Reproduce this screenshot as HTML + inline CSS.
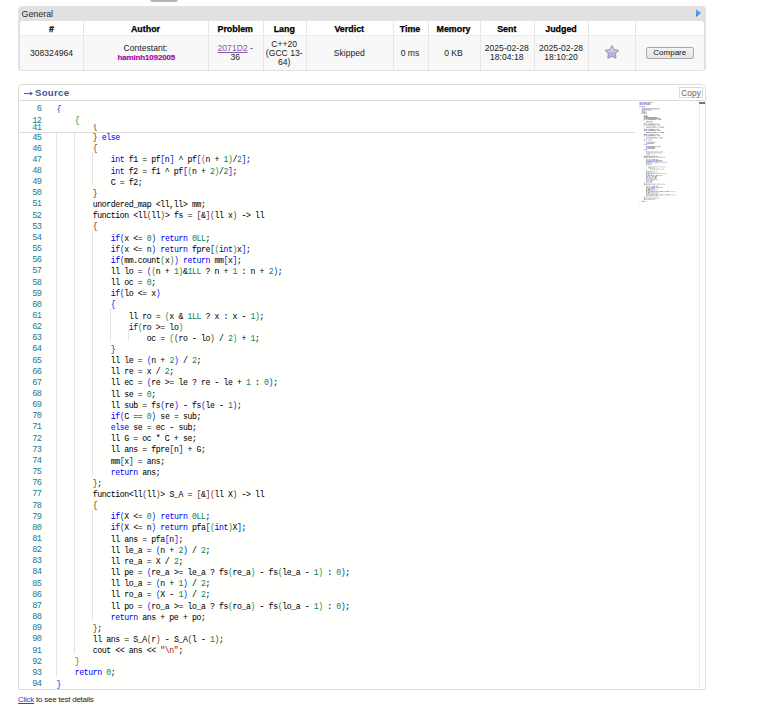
<!DOCTYPE html>
<html><head><meta charset="utf-8">
<style>
html,body{margin:0;padding:0;background:#fff;}
body{width:768px;height:713px;position:relative;overflow:hidden;font-family:"Liberation Sans",sans-serif;color:#222;}
.abs{position:absolute;}
#tab{left:149.5px;top:-3px;width:28px;height:5px;background:#b4b4b4;border-radius:3px;}
#gen{left:18px;top:6px;width:688px;height:65px;background:#e1e1e1;border-radius:4px;}
#gentitle{left:21.5px;top:8.5px;font-size:8.9px;line-height:10px;color:#2a2a2a;}
#tri{left:696px;top:9px;width:0;height:0;border-top:4px solid transparent;border-bottom:4px solid transparent;border-left:5px solid #3d8ede;}
#tbl{left:20px;top:20.5px;width:684px;height:49.5px;background:#f8f8f8;border-radius:3px 3px 0 0;overflow:hidden;}
#thead{left:0;top:0;width:684px;height:14.5px;background:#fff;}
.vd{position:absolute;top:0;width:1px;height:49.5px;background:#e6e6e6;}
#hline{left:0;top:14.5px;width:684px;height:1px;background:#ececec;}
.th{position:absolute;top:1.6px;height:14.5px;line-height:14.5px;text-align:center;font-weight:bold;font-size:8.9px;color:#000;-webkit-text-stroke:0.25px #000;}
.td{position:absolute;text-align:center;font-size:8.6px;line-height:8.9px;color:#222;}
#src{left:18px;top:84px;width:686px;height:604px;border:1px solid #dcdcdc;border-radius:4px 4px 0 0;background:#fff;}
#srchead{left:0;top:0;width:686px;height:15px;border-bottom:1px solid #dcdcdc;}
#srctitle{left:16px;top:2.7px;font-size:9.6px;letter-spacing:0.3px;line-height:10px;font-weight:bold;color:#3b5998;}
#copy{left:660.3px;top:2.3px;width:21.6px;height:8.3px;border:1px solid #dadada;font-size:8.4px;line-height:8.6px;text-align:center;color:#666;background:#fff;}
#ed{left:0;top:16.5px;width:686px;height:587.5px;background:#fffffe;overflow:hidden;}
.ln{position:absolute;left:0;width:41.4px;padding-top:3.2px;text-align:right;font-family:"Liberation Mono",monospace;font-size:8.7px;letter-spacing:-0.6px;height:11.153px;line-height:11.153px;color:#237893;}
.cl{position:absolute;left:56.6px;padding-top:2.8px;white-space:pre;font-family:"Liberation Mono",monospace;font-size:8.2px;letter-spacing:-0.403px;height:11.153px;line-height:11.153px;color:#000;-webkit-text-stroke:0.04px currentColor;}
.gd{position:absolute;width:1px;background:#e4e4e4;}
.srow{position:absolute;left:0;width:635px;height:11.134px;background:#fffffe;}
#stickyline{left:18px;top:132px;width:617px;height:1px;background:#dddddd;}
#vscroll{left:699px;top:101px;width:1px;height:587px;background:#ececec;}
#vthumb{left:699px;top:102px;width:6px;height:2px;background:#777;}
#click{left:18px;top:695.3px;font-size:8px;letter-spacing:-0.25px;line-height:10px;color:#222;}
#click a{color:#3344cc;text-decoration:underline;}
</style></head><body>
<div id="tab" class="abs"></div>
<div id="gen" class="abs"></div>
<div id="gentitle" class="abs">General</div>
<svg class="abs" style="left:696px;top:9px" width="6" height="8" viewBox="0 0 6 8"><defs><linearGradient id="tg" x1="0" y1="0" x2="0" y2="1"><stop offset="0" stop-color="#7ab8ec"/><stop offset="1" stop-color="#2a7fd4"/></linearGradient></defs><path d="M0 0 L5 4 L0 8 Z" fill="url(#tg)"/></svg>
<div id="tbl" class="abs">
  <div id="thead" class="abs"></div>
  <div id="hline" class="abs"></div>
  <div class="vd" style="left:63px"></div>
  <div class="vd" style="left:188px"></div>
  <div class="vd" style="left:242.5px"></div>
  <div class="vd" style="left:286px"></div>
  <div class="vd" style="left:372.5px"></div>
  <div class="vd" style="left:407.5px"></div>
  <div class="vd" style="left:459.5px"></div>
  <div class="vd" style="left:514px"></div>
  <div class="vd" style="left:568px"></div>
  <div class="vd" style="left:615px"></div>
  <div class="th" style="left:0;width:63px">#</div>
  <div class="th" style="left:63px;width:125px">Author</div>
  <div class="th" style="left:188px;width:54.5px">Problem</div>
  <div class="th" style="left:242.5px;width:43.5px">Lang</div>
  <div class="th" style="left:286px;width:86.5px">Verdict</div>
  <div class="th" style="left:372.5px;width:35px">Time</div>
  <div class="th" style="left:407.5px;width:52px">Memory</div>
  <div class="th" style="left:459.5px;width:54.5px">Sent</div>
  <div class="th" style="left:514px;width:54px">Judged</div>
  <div class="td" style="left:0;width:63px;top:28.2px">308324964</div>
  <div class="td" style="left:63px;width:125px;top:23.4px">Contestant:<br><b style="color:#a0a;font-size:8px;letter-spacing:-0.16px;position:relative;left:0.8px;-webkit-text-stroke:0.15px #a0a">haminh1092005</b></div>
  <div class="td" style="left:188px;width:54.5px;top:23.4px"><span style="color:#8a5aa8;text-decoration:underline">2071D2</span> -<br>36</div>
  <div class="td" style="left:242.5px;width:43.5px;top:19.2px">C++20<br>(GCC 13-<br>64)</div>
  <div class="td" style="left:286px;width:86.5px;top:28.2px">Skipped</div>
  <div class="td" style="left:372.5px;width:35px;top:28.2px">0 ms</div>
  <div class="td" style="left:407.5px;width:52px;top:28.2px">0 KB</div>
  <div class="td" style="left:459.5px;width:54.5px;top:23.4px">2025-02-28<br>18:04:18</div>
  <div class="td" style="left:514px;width:54px;top:23.4px">2025-02-28<br>18:10:20</div>
  <svg class="abs" style="left:584.2px;top:24.3px" width="16" height="15" viewBox="0 0 16 15">
    <defs><linearGradient id="sg" x1="0" y1="0" x2="0" y2="1"><stop offset="0" stop-color="#d6d6e2"/><stop offset="0.5" stop-color="#c8c8de"/><stop offset="0.55" stop-color="#b2b2dc"/><stop offset="1" stop-color="#b8b8ee"/></linearGradient></defs>
    <path d="M7.90 0.60 L10.10 4.57 L14.56 5.44 L11.47 8.76 L12.01 13.26 L7.90 11.35 L3.79 13.26 L4.33 8.76 L1.24 5.44 L5.70 4.57 Z" fill="url(#sg)" stroke="#8e8eaa" stroke-width="1" stroke-linejoin="round"/>
  </svg>
  <div class="abs" style="left:626px;top:26.6px;width:45.5px;height:9.5px;border:1px solid #a8a8a8;border-radius:2px;background:linear-gradient(#f4f4f4,#e4e4e4);font-size:8px;line-height:9.5px;text-align:center;color:#111;">Compare</div>
</div>

<div id="src" class="abs">
  <div id="srchead" class="abs"></div>
  <svg class="abs" style="left:5px;top:6.2px" width="10" height="5" viewBox="0 0 10 5"><path d="M0 2.5 H7" stroke="#4a66a8" stroke-width="1.1"/><path d="M6.2 0.6 L9 2.5 L6.2 4.4 Z" fill="#3b5998"/></svg><div id="srctitle" class="abs">Source</div>
  <div id="copy" class="abs"><span style="position:relative;top:0.8px">Copy</span></div>
</div>
<div class="abs" style="left:19px;top:101px;width:686px;height:587.5px;overflow:hidden;">
  <div class="abs" style="left:-19px;top:-101px;width:768px;height:713px;">
    <div class="abs" style="left:18px;top:101px;width:687px;height:588px;background:#fffffe"></div>
    <div class="gd" style="left:56.00px;top:129.33px;height:546.50px"></div><div class="gd" style="left:74.00px;top:129.33px;height:524.19px"></div><div class="gd" style="left:92.00px;top:151.64px;height:33.46px"></div><div class="gd" style="left:92.00px;top:229.71px;height:245.37px"></div><div class="gd" style="left:92.00px;top:508.53px;height:111.53px"></div><div class="gd" style="left:110.00px;top:307.78px;height:33.46px"></div><div class="gd" style="left:128.00px;top:330.08px;height:11.15px"></div>
    <div class="abs" style="left:0;top:0;width:0;height:0">
      <div class="abs" style="left:0;top:0;"><div class="ln" style="top:129.330px">45</div><div class="cl" style="top:129.330px">&nbsp;&nbsp;&nbsp;&nbsp;&nbsp;&nbsp;&nbsp;&nbsp;<span style="color:#7b3814">}</span>&nbsp;<span style="color:#0000ff">else</span></div><div class="ln" style="top:140.483px">46</div><div class="cl" style="top:140.483px">&nbsp;&nbsp;&nbsp;&nbsp;&nbsp;&nbsp;&nbsp;&nbsp;<span style="color:#7b3814">{</span></div><div class="ln" style="top:151.636px">47</div><div class="cl" style="top:151.636px">&nbsp;&nbsp;&nbsp;&nbsp;&nbsp;&nbsp;&nbsp;&nbsp;&nbsp;&nbsp;&nbsp;&nbsp;<span style="color:#0000ff">int</span>&nbsp;f1&nbsp;=&nbsp;pf<span style="color:#0431fa">[</span>n<span style="color:#0431fa">]</span>&nbsp;^&nbsp;pf<span style="color:#0431fa">[</span><span style="color:#319331">(</span>n&nbsp;+&nbsp;<span style="color:#098658">1</span><span style="color:#319331">)</span>/<span style="color:#098658">2</span><span style="color:#0431fa">]</span>;</div><div class="ln" style="top:162.789px">48</div><div class="cl" style="top:162.789px">&nbsp;&nbsp;&nbsp;&nbsp;&nbsp;&nbsp;&nbsp;&nbsp;&nbsp;&nbsp;&nbsp;&nbsp;<span style="color:#0000ff">int</span>&nbsp;f2&nbsp;=&nbsp;f1&nbsp;^&nbsp;pf<span style="color:#0431fa">[</span><span style="color:#319331">(</span>n&nbsp;+&nbsp;<span style="color:#098658">2</span><span style="color:#319331">)</span>/<span style="color:#098658">2</span><span style="color:#0431fa">]</span>;</div><div class="ln" style="top:173.942px">49</div><div class="cl" style="top:173.942px">&nbsp;&nbsp;&nbsp;&nbsp;&nbsp;&nbsp;&nbsp;&nbsp;&nbsp;&nbsp;&nbsp;&nbsp;C&nbsp;=&nbsp;f2;</div><div class="ln" style="top:185.095px">50</div><div class="cl" style="top:185.095px">&nbsp;&nbsp;&nbsp;&nbsp;&nbsp;&nbsp;&nbsp;&nbsp;<span style="color:#7b3814">}</span></div><div class="ln" style="top:196.248px">51</div><div class="cl" style="top:196.248px">&nbsp;&nbsp;&nbsp;&nbsp;&nbsp;&nbsp;&nbsp;&nbsp;unordered_map&nbsp;&lt;ll,ll&gt;&nbsp;mm;</div><div class="ln" style="top:207.401px">52</div><div class="cl" style="top:207.401px">&nbsp;&nbsp;&nbsp;&nbsp;&nbsp;&nbsp;&nbsp;&nbsp;function&nbsp;&lt;ll<span style="color:#7b3814">(</span>ll<span style="color:#7b3814">)</span>&gt;&nbsp;fs&nbsp;=&nbsp;<span style="color:#7b3814">[</span>&amp;<span style="color:#7b3814">]</span><span style="color:#7b3814">(</span>ll&nbsp;x<span style="color:#7b3814">)</span>&nbsp;-&gt;&nbsp;ll</div><div class="ln" style="top:218.554px">53</div><div class="cl" style="top:218.554px">&nbsp;&nbsp;&nbsp;&nbsp;&nbsp;&nbsp;&nbsp;&nbsp;<span style="color:#7b3814">{</span></div><div class="ln" style="top:229.707px">54</div><div class="cl" style="top:229.707px">&nbsp;&nbsp;&nbsp;&nbsp;&nbsp;&nbsp;&nbsp;&nbsp;&nbsp;&nbsp;&nbsp;&nbsp;<span style="color:#0000ff">if</span><span style="color:#0431fa">(</span>x&nbsp;&lt;=&nbsp;<span style="color:#098658">0</span><span style="color:#0431fa">)</span>&nbsp;<span style="color:#0000ff">return</span>&nbsp;<span style="color:#098658">0LL</span>;</div><div class="ln" style="top:240.860px">55</div><div class="cl" style="top:240.860px">&nbsp;&nbsp;&nbsp;&nbsp;&nbsp;&nbsp;&nbsp;&nbsp;&nbsp;&nbsp;&nbsp;&nbsp;<span style="color:#0000ff">if</span><span style="color:#0431fa">(</span>x&nbsp;&lt;=&nbsp;n<span style="color:#0431fa">)</span>&nbsp;<span style="color:#0000ff">return</span>&nbsp;fpre<span style="color:#0431fa">[</span><span style="color:#319331">(</span><span style="color:#0000ff">int</span><span style="color:#319331">)</span>x<span style="color:#0431fa">]</span>;</div><div class="ln" style="top:252.013px">56</div><div class="cl" style="top:252.013px">&nbsp;&nbsp;&nbsp;&nbsp;&nbsp;&nbsp;&nbsp;&nbsp;&nbsp;&nbsp;&nbsp;&nbsp;<span style="color:#0000ff">if</span><span style="color:#0431fa">(</span>mm.count<span style="color:#319331">(</span>x<span style="color:#319331">)</span><span style="color:#0431fa">)</span>&nbsp;<span style="color:#0000ff">return</span>&nbsp;mm<span style="color:#0431fa">[</span>x<span style="color:#0431fa">]</span>;</div><div class="ln" style="top:263.166px">57</div><div class="cl" style="top:263.166px">&nbsp;&nbsp;&nbsp;&nbsp;&nbsp;&nbsp;&nbsp;&nbsp;&nbsp;&nbsp;&nbsp;&nbsp;ll&nbsp;lo&nbsp;=&nbsp;<span style="color:#0431fa">(</span><span style="color:#319331">(</span>n&nbsp;+&nbsp;<span style="color:#098658">1</span><span style="color:#319331">)</span>&amp;<span style="color:#098658">1LL</span>&nbsp;?&nbsp;n&nbsp;+&nbsp;<span style="color:#098658">1</span>&nbsp;:&nbsp;n&nbsp;+&nbsp;<span style="color:#098658">2</span><span style="color:#0431fa">)</span>;</div><div class="ln" style="top:274.319px">58</div><div class="cl" style="top:274.319px">&nbsp;&nbsp;&nbsp;&nbsp;&nbsp;&nbsp;&nbsp;&nbsp;&nbsp;&nbsp;&nbsp;&nbsp;ll&nbsp;oc&nbsp;=&nbsp;<span style="color:#098658">0</span>;</div><div class="ln" style="top:285.472px">59</div><div class="cl" style="top:285.472px">&nbsp;&nbsp;&nbsp;&nbsp;&nbsp;&nbsp;&nbsp;&nbsp;&nbsp;&nbsp;&nbsp;&nbsp;<span style="color:#0000ff">if</span><span style="color:#0431fa">(</span>lo&nbsp;&lt;=&nbsp;x<span style="color:#0431fa">)</span></div><div class="ln" style="top:296.625px">60</div><div class="cl" style="top:296.625px">&nbsp;&nbsp;&nbsp;&nbsp;&nbsp;&nbsp;&nbsp;&nbsp;&nbsp;&nbsp;&nbsp;&nbsp;<span style="color:#0431fa">{</span></div><div class="ln" style="top:307.778px">61</div><div class="cl" style="top:307.778px">&nbsp;&nbsp;&nbsp;&nbsp;&nbsp;&nbsp;&nbsp;&nbsp;&nbsp;&nbsp;&nbsp;&nbsp;&nbsp;&nbsp;&nbsp;&nbsp;ll&nbsp;ro&nbsp;=&nbsp;<span style="color:#319331">(</span>x&nbsp;&amp;&nbsp;<span style="color:#098658">1LL</span>&nbsp;?&nbsp;x&nbsp;:&nbsp;x&nbsp;-&nbsp;<span style="color:#098658">1</span><span style="color:#319331">)</span>;</div><div class="ln" style="top:318.931px">62</div><div class="cl" style="top:318.931px">&nbsp;&nbsp;&nbsp;&nbsp;&nbsp;&nbsp;&nbsp;&nbsp;&nbsp;&nbsp;&nbsp;&nbsp;&nbsp;&nbsp;&nbsp;&nbsp;<span style="color:#0000ff">if</span><span style="color:#319331">(</span>ro&nbsp;&gt;=&nbsp;lo<span style="color:#319331">)</span></div><div class="ln" style="top:330.084px">63</div><div class="cl" style="top:330.084px">&nbsp;&nbsp;&nbsp;&nbsp;&nbsp;&nbsp;&nbsp;&nbsp;&nbsp;&nbsp;&nbsp;&nbsp;&nbsp;&nbsp;&nbsp;&nbsp;&nbsp;&nbsp;&nbsp;&nbsp;oc&nbsp;=&nbsp;<span style="color:#319331">(</span><span style="color:#7b3814">(</span>ro&nbsp;-&nbsp;lo<span style="color:#7b3814">)</span>&nbsp;/&nbsp;<span style="color:#098658">2</span><span style="color:#319331">)</span>&nbsp;+&nbsp;<span style="color:#098658">1</span>;</div><div class="ln" style="top:341.237px">64</div><div class="cl" style="top:341.237px">&nbsp;&nbsp;&nbsp;&nbsp;&nbsp;&nbsp;&nbsp;&nbsp;&nbsp;&nbsp;&nbsp;&nbsp;<span style="color:#0431fa">}</span></div><div class="ln" style="top:352.390px">65</div><div class="cl" style="top:352.390px">&nbsp;&nbsp;&nbsp;&nbsp;&nbsp;&nbsp;&nbsp;&nbsp;&nbsp;&nbsp;&nbsp;&nbsp;ll&nbsp;le&nbsp;=&nbsp;<span style="color:#0431fa">(</span>n&nbsp;+&nbsp;<span style="color:#098658">2</span><span style="color:#0431fa">)</span>&nbsp;/&nbsp;<span style="color:#098658">2</span>;</div><div class="ln" style="top:363.543px">66</div><div class="cl" style="top:363.543px">&nbsp;&nbsp;&nbsp;&nbsp;&nbsp;&nbsp;&nbsp;&nbsp;&nbsp;&nbsp;&nbsp;&nbsp;ll&nbsp;re&nbsp;=&nbsp;x&nbsp;/&nbsp;<span style="color:#098658">2</span>;</div><div class="ln" style="top:374.696px">67</div><div class="cl" style="top:374.696px">&nbsp;&nbsp;&nbsp;&nbsp;&nbsp;&nbsp;&nbsp;&nbsp;&nbsp;&nbsp;&nbsp;&nbsp;ll&nbsp;ec&nbsp;=&nbsp;<span style="color:#0431fa">(</span>re&nbsp;&gt;=&nbsp;le&nbsp;?&nbsp;re&nbsp;-&nbsp;le&nbsp;+&nbsp;<span style="color:#098658">1</span>&nbsp;:&nbsp;<span style="color:#098658">0</span><span style="color:#0431fa">)</span>;</div><div class="ln" style="top:385.849px">68</div><div class="cl" style="top:385.849px">&nbsp;&nbsp;&nbsp;&nbsp;&nbsp;&nbsp;&nbsp;&nbsp;&nbsp;&nbsp;&nbsp;&nbsp;ll&nbsp;se&nbsp;=&nbsp;<span style="color:#098658">0</span>;</div><div class="ln" style="top:397.002px">69</div><div class="cl" style="top:397.002px">&nbsp;&nbsp;&nbsp;&nbsp;&nbsp;&nbsp;&nbsp;&nbsp;&nbsp;&nbsp;&nbsp;&nbsp;ll&nbsp;sub&nbsp;=&nbsp;fs<span style="color:#0431fa">(</span>re<span style="color:#0431fa">)</span>&nbsp;-&nbsp;fs<span style="color:#0431fa">(</span>le&nbsp;-&nbsp;<span style="color:#098658">1</span><span style="color:#0431fa">)</span>;</div><div class="ln" style="top:408.155px">70</div><div class="cl" style="top:408.155px">&nbsp;&nbsp;&nbsp;&nbsp;&nbsp;&nbsp;&nbsp;&nbsp;&nbsp;&nbsp;&nbsp;&nbsp;<span style="color:#0000ff">if</span><span style="color:#0431fa">(</span>C&nbsp;==&nbsp;<span style="color:#098658">0</span><span style="color:#0431fa">)</span>&nbsp;se&nbsp;=&nbsp;sub;</div><div class="ln" style="top:419.308px">71</div><div class="cl" style="top:419.308px">&nbsp;&nbsp;&nbsp;&nbsp;&nbsp;&nbsp;&nbsp;&nbsp;&nbsp;&nbsp;&nbsp;&nbsp;<span style="color:#0000ff">else</span>&nbsp;se&nbsp;=&nbsp;ec&nbsp;-&nbsp;sub;</div><div class="ln" style="top:430.461px">72</div><div class="cl" style="top:430.461px">&nbsp;&nbsp;&nbsp;&nbsp;&nbsp;&nbsp;&nbsp;&nbsp;&nbsp;&nbsp;&nbsp;&nbsp;ll&nbsp;G&nbsp;=&nbsp;oc&nbsp;*&nbsp;C&nbsp;+&nbsp;se;</div><div class="ln" style="top:441.614px">73</div><div class="cl" style="top:441.614px">&nbsp;&nbsp;&nbsp;&nbsp;&nbsp;&nbsp;&nbsp;&nbsp;&nbsp;&nbsp;&nbsp;&nbsp;ll&nbsp;ans&nbsp;=&nbsp;fpre<span style="color:#0431fa">[</span>n<span style="color:#0431fa">]</span>&nbsp;+&nbsp;G;</div><div class="ln" style="top:452.767px">74</div><div class="cl" style="top:452.767px">&nbsp;&nbsp;&nbsp;&nbsp;&nbsp;&nbsp;&nbsp;&nbsp;&nbsp;&nbsp;&nbsp;&nbsp;mm<span style="color:#0431fa">[</span>x<span style="color:#0431fa">]</span>&nbsp;=&nbsp;ans;</div><div class="ln" style="top:463.920px">75</div><div class="cl" style="top:463.920px">&nbsp;&nbsp;&nbsp;&nbsp;&nbsp;&nbsp;&nbsp;&nbsp;&nbsp;&nbsp;&nbsp;&nbsp;<span style="color:#0000ff">return</span>&nbsp;ans;</div><div class="ln" style="top:475.073px">76</div><div class="cl" style="top:475.073px">&nbsp;&nbsp;&nbsp;&nbsp;&nbsp;&nbsp;&nbsp;&nbsp;<span style="color:#7b3814">}</span>;</div><div class="ln" style="top:486.226px">77</div><div class="cl" style="top:486.226px">&nbsp;&nbsp;&nbsp;&nbsp;&nbsp;&nbsp;&nbsp;&nbsp;function&lt;ll<span style="color:#7b3814">(</span>ll<span style="color:#7b3814">)</span>&gt;&nbsp;S_A&nbsp;=&nbsp;<span style="color:#7b3814">[</span>&amp;<span style="color:#7b3814">]</span><span style="color:#7b3814">(</span>ll&nbsp;X<span style="color:#7b3814">)</span>&nbsp;-&gt;&nbsp;ll</div><div class="ln" style="top:497.379px">78</div><div class="cl" style="top:497.379px">&nbsp;&nbsp;&nbsp;&nbsp;&nbsp;&nbsp;&nbsp;&nbsp;<span style="color:#7b3814">{</span></div><div class="ln" style="top:508.532px">79</div><div class="cl" style="top:508.532px">&nbsp;&nbsp;&nbsp;&nbsp;&nbsp;&nbsp;&nbsp;&nbsp;&nbsp;&nbsp;&nbsp;&nbsp;<span style="color:#0000ff">if</span><span style="color:#0431fa">(</span>X&nbsp;&lt;=&nbsp;<span style="color:#098658">0</span><span style="color:#0431fa">)</span>&nbsp;<span style="color:#0000ff">return</span>&nbsp;<span style="color:#098658">0LL</span>;</div><div class="ln" style="top:519.685px">80</div><div class="cl" style="top:519.685px">&nbsp;&nbsp;&nbsp;&nbsp;&nbsp;&nbsp;&nbsp;&nbsp;&nbsp;&nbsp;&nbsp;&nbsp;<span style="color:#0000ff">if</span><span style="color:#0431fa">(</span>X&nbsp;&lt;=&nbsp;n<span style="color:#0431fa">)</span>&nbsp;<span style="color:#0000ff">return</span>&nbsp;pfa<span style="color:#0431fa">[</span><span style="color:#319331">(</span><span style="color:#0000ff">int</span><span style="color:#319331">)</span>X<span style="color:#0431fa">]</span>;</div><div class="ln" style="top:530.838px">81</div><div class="cl" style="top:530.838px">&nbsp;&nbsp;&nbsp;&nbsp;&nbsp;&nbsp;&nbsp;&nbsp;&nbsp;&nbsp;&nbsp;&nbsp;ll&nbsp;ans&nbsp;=&nbsp;pfa<span style="color:#0431fa">[</span>n<span style="color:#0431fa">]</span>;</div><div class="ln" style="top:541.991px">82</div><div class="cl" style="top:541.991px">&nbsp;&nbsp;&nbsp;&nbsp;&nbsp;&nbsp;&nbsp;&nbsp;&nbsp;&nbsp;&nbsp;&nbsp;ll&nbsp;le_a&nbsp;=&nbsp;<span style="color:#0431fa">(</span>n&nbsp;+&nbsp;<span style="color:#098658">2</span><span style="color:#0431fa">)</span>&nbsp;/&nbsp;<span style="color:#098658">2</span>;</div><div class="ln" style="top:553.144px">83</div><div class="cl" style="top:553.144px">&nbsp;&nbsp;&nbsp;&nbsp;&nbsp;&nbsp;&nbsp;&nbsp;&nbsp;&nbsp;&nbsp;&nbsp;ll&nbsp;re_a&nbsp;=&nbsp;X&nbsp;/&nbsp;<span style="color:#098658">2</span>;</div><div class="ln" style="top:564.297px">84</div><div class="cl" style="top:564.297px">&nbsp;&nbsp;&nbsp;&nbsp;&nbsp;&nbsp;&nbsp;&nbsp;&nbsp;&nbsp;&nbsp;&nbsp;ll&nbsp;pe&nbsp;=&nbsp;<span style="color:#0431fa">(</span>re_a&nbsp;&gt;=&nbsp;le_a&nbsp;?&nbsp;fs<span style="color:#319331">(</span>re_a<span style="color:#319331">)</span>&nbsp;-&nbsp;fs<span style="color:#319331">(</span>le_a&nbsp;-&nbsp;<span style="color:#098658">1</span><span style="color:#319331">)</span>&nbsp;:&nbsp;<span style="color:#098658">0</span><span style="color:#0431fa">)</span>;</div><div class="ln" style="top:575.450px">85</div><div class="cl" style="top:575.450px">&nbsp;&nbsp;&nbsp;&nbsp;&nbsp;&nbsp;&nbsp;&nbsp;&nbsp;&nbsp;&nbsp;&nbsp;ll&nbsp;lo_a&nbsp;=&nbsp;<span style="color:#0431fa">(</span>n&nbsp;+&nbsp;<span style="color:#098658">1</span><span style="color:#0431fa">)</span>&nbsp;/&nbsp;<span style="color:#098658">2</span>;</div><div class="ln" style="top:586.603px">86</div><div class="cl" style="top:586.603px">&nbsp;&nbsp;&nbsp;&nbsp;&nbsp;&nbsp;&nbsp;&nbsp;&nbsp;&nbsp;&nbsp;&nbsp;ll&nbsp;ro_a&nbsp;=&nbsp;<span style="color:#0431fa">(</span>X&nbsp;-&nbsp;<span style="color:#098658">1</span><span style="color:#0431fa">)</span>&nbsp;/&nbsp;<span style="color:#098658">2</span>;</div><div class="ln" style="top:597.756px">87</div><div class="cl" style="top:597.756px">&nbsp;&nbsp;&nbsp;&nbsp;&nbsp;&nbsp;&nbsp;&nbsp;&nbsp;&nbsp;&nbsp;&nbsp;ll&nbsp;po&nbsp;=&nbsp;<span style="color:#0431fa">(</span>ro_a&nbsp;&gt;=&nbsp;lo_a&nbsp;?&nbsp;fs<span style="color:#319331">(</span>ro_a<span style="color:#319331">)</span>&nbsp;-&nbsp;fs<span style="color:#319331">(</span>lo_a&nbsp;-&nbsp;<span style="color:#098658">1</span><span style="color:#319331">)</span>&nbsp;:&nbsp;<span style="color:#098658">0</span><span style="color:#0431fa">)</span>;</div><div class="ln" style="top:608.909px">88</div><div class="cl" style="top:608.909px">&nbsp;&nbsp;&nbsp;&nbsp;&nbsp;&nbsp;&nbsp;&nbsp;&nbsp;&nbsp;&nbsp;&nbsp;<span style="color:#0000ff">return</span>&nbsp;ans&nbsp;+&nbsp;pe&nbsp;+&nbsp;po;</div><div class="ln" style="top:620.062px">89</div><div class="cl" style="top:620.062px">&nbsp;&nbsp;&nbsp;&nbsp;&nbsp;&nbsp;&nbsp;&nbsp;<span style="color:#7b3814">}</span>;</div><div class="ln" style="top:631.215px">90</div><div class="cl" style="top:631.215px">&nbsp;&nbsp;&nbsp;&nbsp;&nbsp;&nbsp;&nbsp;&nbsp;ll&nbsp;ans&nbsp;=&nbsp;S_A<span style="color:#7b3814">(</span>r<span style="color:#7b3814">)</span>&nbsp;-&nbsp;S_A<span style="color:#7b3814">(</span>l&nbsp;-&nbsp;<span style="color:#098658">1</span><span style="color:#7b3814">)</span>;</div><div class="ln" style="top:642.368px">91</div><div class="cl" style="top:642.368px">&nbsp;&nbsp;&nbsp;&nbsp;&nbsp;&nbsp;&nbsp;&nbsp;cout&nbsp;&lt;&lt;&nbsp;ans&nbsp;&lt;&lt;&nbsp;<span style="color:#a31515">&quot;\n&quot;</span>;</div><div class="ln" style="top:653.521px">92</div><div class="cl" style="top:653.521px">&nbsp;&nbsp;&nbsp;&nbsp;<span style="color:#319331">}</span></div><div class="ln" style="top:664.674px">93</div><div class="cl" style="top:664.674px">&nbsp;&nbsp;&nbsp;&nbsp;<span style="color:#0000ff">return</span>&nbsp;<span style="color:#098658">0</span>;</div><div class="ln" style="top:675.827px">94</div><div class="cl" style="top:675.827px"><span style="color:#0431fa">}</span></div></div>
    </div>
    <div class="srow" style="top:119.700px;height:12.3px"><div class="ln" style="top:0">41</div><div class="cl" style="top:-1px;padding-top:2.3px">&nbsp;&nbsp;&nbsp;&nbsp;&nbsp;&nbsp;&nbsp;&nbsp;<span style="color:#7b3814">{</span></div></div><div class="srow" style="top:101.300px"><div class="ln" style="top:0">6</div><div class="cl" style="top:0"><span style="color:#0431fa">{</span></div></div><div class="srow" style="top:112.500px"><div class="ln" style="top:0">12</div><div class="cl" style="top:0">&nbsp;&nbsp;&nbsp;&nbsp;<span style="color:#319331">{</span></div></div>
    <div id="stickyline" class="abs"></div>
    <svg width="768" height="713" style="position:absolute;left:0;top:0"><g opacity="0.4"><rect x="639.40" y="102.00" width="4.40" height="0.85" fill="#0000ff"/><rect x="644.35" y="102.00" width="8.25" height="0.85" fill="#a31515"/><rect x="639.40" y="103.08" width="2.75" height="0.85" fill="#0000ff"/><rect x="642.70" y="103.08" width="4.95" height="0.85" fill="#0000ff"/><rect x="648.20" y="103.08" width="2.20" height="0.85" fill="#000"/><rect x="639.40" y="104.15" width="3.85" height="0.85" fill="#0000ff"/><rect x="643.80" y="104.15" width="1.10" height="0.85" fill="#000"/><rect x="645.45" y="104.15" width="4.95" height="0.85" fill="#0000ff"/><rect x="639.40" y="106.30" width="1.65" height="0.85" fill="#0000ff"/><rect x="641.60" y="106.30" width="3.30" height="0.85" fill="#000"/><rect x="639.40" y="107.38" width="0.55" height="0.85" fill="#0431fa"/><rect x="641.60" y="108.45" width="14.30" height="0.85" fill="#000"/><rect x="655.90" y="108.45" width="2.75" height="0.85" fill="#0000ff"/><rect x="658.65" y="108.45" width="1.10" height="0.85" fill="#000"/><rect x="641.60" y="109.53" width="4.40" height="0.85" fill="#000"/><rect x="646.00" y="109.53" width="4.40" height="0.85" fill="#0000ff"/><rect x="650.40" y="109.53" width="1.10" height="0.85" fill="#000"/><rect x="641.60" y="110.60" width="1.65" height="0.85" fill="#0000ff"/><rect x="643.80" y="110.60" width="1.10" height="0.85" fill="#000"/><rect x="641.60" y="111.67" width="4.40" height="0.85" fill="#000"/><rect x="641.60" y="112.75" width="2.75" height="0.85" fill="#0000ff"/><rect x="644.35" y="112.75" width="2.75" height="0.85" fill="#000"/><rect x="641.60" y="113.83" width="0.55" height="0.85" fill="#319331"/><rect x="643.80" y="114.90" width="1.65" height="0.85" fill="#0000ff"/><rect x="646.00" y="114.90" width="1.10" height="0.85" fill="#000"/><rect x="643.80" y="115.97" width="4.40" height="0.85" fill="#000"/><rect x="643.80" y="117.05" width="13.20" height="0.85" fill="#000"/><rect x="643.80" y="118.12" width="1.65" height="0.85" fill="#0000ff"/><rect x="646.00" y="118.12" width="14.30" height="0.85" fill="#000"/><rect x="643.80" y="119.20" width="1.65" height="0.85" fill="#0000ff"/><rect x="646.00" y="119.20" width="1.65" height="0.85" fill="#0000ff"/><rect x="648.20" y="119.20" width="7.70" height="0.85" fill="#000"/><rect x="656.45" y="119.20" width="1.65" height="0.85" fill="#098658"/><rect x="658.65" y="119.20" width="2.75" height="0.85" fill="#000"/><rect x="643.80" y="120.28" width="0.55" height="0.85" fill="#7b3814"/><rect x="646.00" y="121.35" width="6.60" height="0.85" fill="#000"/><rect x="643.80" y="122.42" width="0.55" height="0.85" fill="#7b3814"/><rect x="643.80" y="123.50" width="3.30" height="0.85" fill="#000"/><rect x="647.65" y="123.50" width="1.65" height="0.85" fill="#0000ff"/><rect x="649.85" y="123.50" width="4.40" height="0.85" fill="#000"/><rect x="654.80" y="123.50" width="1.10" height="0.85" fill="#098658"/><rect x="656.45" y="123.50" width="2.20" height="0.85" fill="#000"/><rect x="643.80" y="124.58" width="1.65" height="0.85" fill="#0000ff"/><rect x="646.00" y="124.58" width="1.65" height="0.85" fill="#0000ff"/><rect x="648.20" y="124.58" width="7.70" height="0.85" fill="#000"/><rect x="656.45" y="124.58" width="1.10" height="0.85" fill="#098658"/><rect x="658.10" y="124.58" width="2.20" height="0.85" fill="#000"/><rect x="643.80" y="125.65" width="0.55" height="0.85" fill="#7b3814"/><rect x="646.00" y="126.72" width="5.50" height="0.85" fill="#000"/><rect x="652.05" y="126.72" width="4.40" height="0.85" fill="#000"/><rect x="657.00" y="126.72" width="2.20" height="0.85" fill="#098658"/><rect x="659.75" y="126.72" width="4.40" height="0.85" fill="#000"/><rect x="643.80" y="127.80" width="0.55" height="0.85" fill="#7b3814"/><rect x="643.80" y="128.88" width="3.30" height="0.85" fill="#000"/><rect x="647.65" y="128.88" width="1.65" height="0.85" fill="#0000ff"/><rect x="649.85" y="128.88" width="4.40" height="0.85" fill="#000"/><rect x="654.80" y="128.88" width="1.10" height="0.85" fill="#098658"/><rect x="656.45" y="128.88" width="2.20" height="0.85" fill="#000"/><rect x="643.80" y="129.95" width="1.65" height="0.85" fill="#0000ff"/><rect x="646.00" y="129.95" width="1.65" height="0.85" fill="#0000ff"/><rect x="648.20" y="129.95" width="7.70" height="0.85" fill="#000"/><rect x="656.45" y="129.95" width="1.10" height="0.85" fill="#098658"/><rect x="658.10" y="129.95" width="2.20" height="0.85" fill="#000"/><rect x="643.80" y="131.03" width="0.55" height="0.85" fill="#7b3814"/><rect x="646.00" y="132.10" width="5.50" height="0.85" fill="#000"/><rect x="652.05" y="132.10" width="4.40" height="0.85" fill="#000"/><rect x="657.00" y="132.10" width="2.20" height="0.85" fill="#098658"/><rect x="659.75" y="132.10" width="4.40" height="0.85" fill="#000"/><rect x="643.80" y="133.18" width="0.55" height="0.85" fill="#7b3814"/><rect x="643.80" y="134.25" width="3.30" height="0.85" fill="#000"/><rect x="647.65" y="134.25" width="1.65" height="0.85" fill="#0000ff"/><rect x="649.85" y="134.25" width="4.40" height="0.85" fill="#000"/><rect x="654.80" y="134.25" width="1.10" height="0.85" fill="#098658"/><rect x="656.45" y="134.25" width="2.20" height="0.85" fill="#000"/><rect x="643.80" y="135.32" width="1.65" height="0.85" fill="#0000ff"/><rect x="646.00" y="135.32" width="1.65" height="0.85" fill="#0000ff"/><rect x="648.20" y="135.32" width="7.70" height="0.85" fill="#000"/><rect x="656.45" y="135.32" width="1.10" height="0.85" fill="#098658"/><rect x="658.10" y="135.32" width="2.20" height="0.85" fill="#000"/><rect x="643.80" y="136.40" width="0.55" height="0.85" fill="#7b3814"/><rect x="646.00" y="137.47" width="6.60" height="0.85" fill="#000"/><rect x="652.60" y="137.47" width="4.40" height="0.85" fill="#000"/><rect x="657.55" y="137.47" width="1.65" height="0.85" fill="#098658"/><rect x="659.75" y="137.47" width="3.30" height="0.85" fill="#000"/><rect x="643.80" y="138.55" width="0.55" height="0.85" fill="#7b3814"/><rect x="643.80" y="139.62" width="1.65" height="0.85" fill="#0000ff"/><rect x="646.00" y="139.62" width="1.10" height="0.85" fill="#000"/><rect x="647.65" y="139.62" width="1.65" height="0.85" fill="#098658"/><rect x="649.85" y="139.62" width="1.65" height="0.85" fill="#000"/><rect x="643.80" y="140.70" width="0.55" height="0.85" fill="#7b3814"/><rect x="646.00" y="141.78" width="1.65" height="0.85" fill="#0000ff"/><rect x="648.20" y="141.78" width="2.20" height="0.85" fill="#000"/><rect x="650.95" y="141.78" width="3.30" height="0.85" fill="#000"/><rect x="654.80" y="141.78" width="1.65" height="0.85" fill="#098658"/><rect x="646.00" y="142.85" width="1.65" height="0.85" fill="#0000ff"/><rect x="648.20" y="142.85" width="5.50" height="0.85" fill="#000"/><rect x="643.80" y="143.93" width="0.55" height="0.85" fill="#7b3814"/><rect x="644.90" y="143.93" width="2.20" height="0.85" fill="#0000ff"/><rect x="643.80" y="145.00" width="0.55" height="0.85" fill="#7b3814"/><rect x="646.00" y="146.07" width="1.65" height="0.85" fill="#0000ff"/><rect x="648.20" y="146.07" width="2.20" height="0.85" fill="#000"/><rect x="650.95" y="146.07" width="4.40" height="0.85" fill="#000"/><rect x="655.90" y="146.07" width="1.65" height="0.85" fill="#098658"/><rect x="658.10" y="146.07" width="2.20" height="0.85" fill="#000"/><rect x="646.00" y="147.15" width="1.65" height="0.85" fill="#0000ff"/><rect x="648.20" y="147.15" width="3.30" height="0.85" fill="#000"/><rect x="652.05" y="147.15" width="2.20" height="0.85" fill="#000"/><rect x="654.80" y="147.15" width="1.65" height="0.85" fill="#098658"/><rect x="646.00" y="148.22" width="1.65" height="0.85" fill="#0000ff"/><rect x="648.20" y="148.22" width="6.60" height="0.85" fill="#000"/><rect x="643.80" y="149.30" width="0.55" height="0.85" fill="#7b3814"/><rect x="644.90" y="149.30" width="2.20" height="0.85" fill="#0000ff"/><rect x="643.80" y="150.38" width="0.55" height="0.85" fill="#7b3814"/><rect x="646.00" y="151.45" width="1.65" height="0.85" fill="#0000ff"/><rect x="648.20" y="151.45" width="1.10" height="0.85" fill="#000"/><rect x="649.85" y="151.45" width="0.55" height="0.85" fill="#000"/><rect x="650.95" y="151.45" width="1.10" height="0.85" fill="#000"/><rect x="652.05" y="151.45" width="0.55" height="0.85" fill="#0431fa"/><rect x="652.60" y="151.45" width="0.55" height="0.85" fill="#000"/><rect x="653.15" y="151.45" width="0.55" height="0.85" fill="#0431fa"/><rect x="654.25" y="151.45" width="0.55" height="0.85" fill="#000"/><rect x="655.35" y="151.45" width="1.10" height="0.85" fill="#000"/><rect x="656.45" y="151.45" width="0.55" height="0.85" fill="#0431fa"/><rect x="657.00" y="151.45" width="0.55" height="0.85" fill="#319331"/><rect x="657.55" y="151.45" width="0.55" height="0.85" fill="#000"/><rect x="658.65" y="151.45" width="0.55" height="0.85" fill="#000"/><rect x="659.75" y="151.45" width="0.55" height="0.85" fill="#098658"/><rect x="660.30" y="151.45" width="0.55" height="0.85" fill="#319331"/><rect x="660.85" y="151.45" width="0.55" height="0.85" fill="#000"/><rect x="661.40" y="151.45" width="0.55" height="0.85" fill="#098658"/><rect x="661.95" y="151.45" width="0.55" height="0.85" fill="#0431fa"/><rect x="662.50" y="151.45" width="0.55" height="0.85" fill="#000"/><rect x="646.00" y="152.53" width="1.65" height="0.85" fill="#0000ff"/><rect x="648.20" y="152.53" width="1.10" height="0.85" fill="#000"/><rect x="649.85" y="152.53" width="0.55" height="0.85" fill="#000"/><rect x="650.95" y="152.53" width="1.10" height="0.85" fill="#000"/><rect x="652.60" y="152.53" width="0.55" height="0.85" fill="#000"/><rect x="653.70" y="152.53" width="1.10" height="0.85" fill="#000"/><rect x="654.80" y="152.53" width="0.55" height="0.85" fill="#0431fa"/><rect x="655.35" y="152.53" width="0.55" height="0.85" fill="#319331"/><rect x="655.90" y="152.53" width="0.55" height="0.85" fill="#000"/><rect x="657.00" y="152.53" width="0.55" height="0.85" fill="#000"/><rect x="658.10" y="152.53" width="0.55" height="0.85" fill="#098658"/><rect x="658.65" y="152.53" width="0.55" height="0.85" fill="#319331"/><rect x="659.20" y="152.53" width="0.55" height="0.85" fill="#000"/><rect x="659.75" y="152.53" width="0.55" height="0.85" fill="#098658"/><rect x="660.30" y="152.53" width="0.55" height="0.85" fill="#0431fa"/><rect x="660.85" y="152.53" width="0.55" height="0.85" fill="#000"/><rect x="646.00" y="153.60" width="0.55" height="0.85" fill="#000"/><rect x="647.10" y="153.60" width="0.55" height="0.85" fill="#000"/><rect x="648.20" y="153.60" width="1.65" height="0.85" fill="#000"/><rect x="643.80" y="154.68" width="0.55" height="0.85" fill="#7b3814"/><rect x="643.80" y="155.75" width="7.15" height="0.85" fill="#000"/><rect x="651.50" y="155.75" width="3.85" height="0.85" fill="#000"/><rect x="655.90" y="155.75" width="1.65" height="0.85" fill="#000"/><rect x="643.80" y="156.82" width="4.40" height="0.85" fill="#000"/><rect x="648.75" y="156.82" width="1.65" height="0.85" fill="#000"/><rect x="650.40" y="156.82" width="0.55" height="0.85" fill="#7b3814"/><rect x="650.95" y="156.82" width="1.10" height="0.85" fill="#000"/><rect x="652.05" y="156.82" width="0.55" height="0.85" fill="#7b3814"/><rect x="652.60" y="156.82" width="0.55" height="0.85" fill="#000"/><rect x="653.70" y="156.82" width="1.10" height="0.85" fill="#000"/><rect x="655.35" y="156.82" width="0.55" height="0.85" fill="#000"/><rect x="656.45" y="156.82" width="0.55" height="0.85" fill="#7b3814"/><rect x="657.00" y="156.82" width="0.55" height="0.85" fill="#000"/><rect x="657.55" y="156.82" width="1.10" height="0.85" fill="#7b3814"/><rect x="658.65" y="156.82" width="1.10" height="0.85" fill="#000"/><rect x="660.30" y="156.82" width="0.55" height="0.85" fill="#000"/><rect x="660.85" y="156.82" width="0.55" height="0.85" fill="#7b3814"/><rect x="661.95" y="156.82" width="1.10" height="0.85" fill="#000"/><rect x="663.60" y="156.82" width="1.10" height="0.85" fill="#000"/><rect x="643.80" y="157.90" width="0.55" height="0.85" fill="#7b3814"/><rect x="646.00" y="158.97" width="1.10" height="0.85" fill="#0000ff"/><rect x="647.10" y="158.97" width="0.55" height="0.85" fill="#0431fa"/><rect x="647.65" y="158.97" width="0.55" height="0.85" fill="#000"/><rect x="648.75" y="158.97" width="1.10" height="0.85" fill="#000"/><rect x="650.40" y="158.97" width="0.55" height="0.85" fill="#098658"/><rect x="650.95" y="158.97" width="0.55" height="0.85" fill="#0431fa"/><rect x="652.05" y="158.97" width="3.30" height="0.85" fill="#0000ff"/><rect x="655.90" y="158.97" width="1.65" height="0.85" fill="#098658"/><rect x="657.55" y="158.97" width="0.55" height="0.85" fill="#000"/><rect x="646.00" y="160.05" width="1.10" height="0.85" fill="#0000ff"/><rect x="647.10" y="160.05" width="0.55" height="0.85" fill="#0431fa"/><rect x="647.65" y="160.05" width="0.55" height="0.85" fill="#000"/><rect x="648.75" y="160.05" width="1.10" height="0.85" fill="#000"/><rect x="650.40" y="160.05" width="0.55" height="0.85" fill="#000"/><rect x="650.95" y="160.05" width="0.55" height="0.85" fill="#0431fa"/><rect x="652.05" y="160.05" width="3.30" height="0.85" fill="#0000ff"/><rect x="655.90" y="160.05" width="2.20" height="0.85" fill="#000"/><rect x="658.10" y="160.05" width="0.55" height="0.85" fill="#0431fa"/><rect x="658.65" y="160.05" width="0.55" height="0.85" fill="#319331"/><rect x="659.20" y="160.05" width="1.65" height="0.85" fill="#0000ff"/><rect x="660.85" y="160.05" width="0.55" height="0.85" fill="#319331"/><rect x="661.40" y="160.05" width="0.55" height="0.85" fill="#000"/><rect x="661.95" y="160.05" width="0.55" height="0.85" fill="#0431fa"/><rect x="662.50" y="160.05" width="0.55" height="0.85" fill="#000"/><rect x="646.00" y="161.12" width="1.10" height="0.85" fill="#0000ff"/><rect x="647.10" y="161.12" width="0.55" height="0.85" fill="#0431fa"/><rect x="647.65" y="161.12" width="4.40" height="0.85" fill="#000"/><rect x="652.05" y="161.12" width="0.55" height="0.85" fill="#319331"/><rect x="652.60" y="161.12" width="0.55" height="0.85" fill="#000"/><rect x="653.15" y="161.12" width="0.55" height="0.85" fill="#319331"/><rect x="653.70" y="161.12" width="0.55" height="0.85" fill="#0431fa"/><rect x="654.80" y="161.12" width="3.30" height="0.85" fill="#0000ff"/><rect x="658.65" y="161.12" width="1.10" height="0.85" fill="#000"/><rect x="659.75" y="161.12" width="0.55" height="0.85" fill="#0431fa"/><rect x="660.30" y="161.12" width="0.55" height="0.85" fill="#000"/><rect x="660.85" y="161.12" width="0.55" height="0.85" fill="#0431fa"/><rect x="661.40" y="161.12" width="0.55" height="0.85" fill="#000"/><rect x="646.00" y="162.20" width="1.10" height="0.85" fill="#000"/><rect x="647.65" y="162.20" width="1.10" height="0.85" fill="#000"/><rect x="649.30" y="162.20" width="0.55" height="0.85" fill="#000"/><rect x="650.40" y="162.20" width="0.55" height="0.85" fill="#0431fa"/><rect x="650.95" y="162.20" width="0.55" height="0.85" fill="#319331"/><rect x="651.50" y="162.20" width="0.55" height="0.85" fill="#000"/><rect x="652.60" y="162.20" width="0.55" height="0.85" fill="#000"/><rect x="653.70" y="162.20" width="0.55" height="0.85" fill="#098658"/><rect x="654.25" y="162.20" width="0.55" height="0.85" fill="#319331"/><rect x="654.80" y="162.20" width="0.55" height="0.85" fill="#000"/><rect x="655.35" y="162.20" width="1.65" height="0.85" fill="#098658"/><rect x="657.55" y="162.20" width="0.55" height="0.85" fill="#000"/><rect x="658.65" y="162.20" width="0.55" height="0.85" fill="#000"/><rect x="659.75" y="162.20" width="0.55" height="0.85" fill="#000"/><rect x="660.85" y="162.20" width="0.55" height="0.85" fill="#098658"/><rect x="661.95" y="162.20" width="0.55" height="0.85" fill="#000"/><rect x="663.05" y="162.20" width="0.55" height="0.85" fill="#000"/><rect x="664.15" y="162.20" width="0.55" height="0.85" fill="#000"/><rect x="665.25" y="162.20" width="0.55" height="0.85" fill="#098658"/><rect x="665.80" y="162.20" width="0.55" height="0.85" fill="#0431fa"/><rect x="666.35" y="162.20" width="0.55" height="0.85" fill="#000"/><rect x="646.00" y="163.28" width="1.10" height="0.85" fill="#000"/><rect x="647.65" y="163.28" width="1.10" height="0.85" fill="#000"/><rect x="649.30" y="163.28" width="0.55" height="0.85" fill="#000"/><rect x="650.40" y="163.28" width="0.55" height="0.85" fill="#098658"/><rect x="650.95" y="163.28" width="0.55" height="0.85" fill="#000"/><rect x="646.00" y="164.35" width="1.10" height="0.85" fill="#0000ff"/><rect x="647.10" y="164.35" width="0.55" height="0.85" fill="#0431fa"/><rect x="647.65" y="164.35" width="1.10" height="0.85" fill="#000"/><rect x="649.30" y="164.35" width="1.10" height="0.85" fill="#000"/><rect x="650.95" y="164.35" width="0.55" height="0.85" fill="#000"/><rect x="651.50" y="164.35" width="0.55" height="0.85" fill="#0431fa"/><rect x="646.00" y="165.43" width="0.55" height="0.85" fill="#0431fa"/><rect x="648.20" y="166.50" width="1.10" height="0.85" fill="#000"/><rect x="649.85" y="166.50" width="1.10" height="0.85" fill="#000"/><rect x="651.50" y="166.50" width="0.55" height="0.85" fill="#000"/><rect x="652.60" y="166.50" width="0.55" height="0.85" fill="#319331"/><rect x="653.15" y="166.50" width="0.55" height="0.85" fill="#000"/><rect x="654.25" y="166.50" width="0.55" height="0.85" fill="#000"/><rect x="655.35" y="166.50" width="1.65" height="0.85" fill="#098658"/><rect x="657.55" y="166.50" width="0.55" height="0.85" fill="#000"/><rect x="658.65" y="166.50" width="0.55" height="0.85" fill="#000"/><rect x="659.75" y="166.50" width="0.55" height="0.85" fill="#000"/><rect x="660.85" y="166.50" width="0.55" height="0.85" fill="#000"/><rect x="661.95" y="166.50" width="0.55" height="0.85" fill="#000"/><rect x="663.05" y="166.50" width="0.55" height="0.85" fill="#098658"/><rect x="663.60" y="166.50" width="0.55" height="0.85" fill="#319331"/><rect x="664.15" y="166.50" width="0.55" height="0.85" fill="#000"/><rect x="648.20" y="167.57" width="1.10" height="0.85" fill="#0000ff"/><rect x="649.30" y="167.57" width="0.55" height="0.85" fill="#319331"/><rect x="649.85" y="167.57" width="1.10" height="0.85" fill="#000"/><rect x="651.50" y="167.57" width="1.10" height="0.85" fill="#000"/><rect x="653.15" y="167.57" width="1.10" height="0.85" fill="#000"/><rect x="654.25" y="167.57" width="0.55" height="0.85" fill="#319331"/><rect x="650.40" y="168.65" width="1.10" height="0.85" fill="#000"/><rect x="652.05" y="168.65" width="0.55" height="0.85" fill="#000"/><rect x="653.15" y="168.65" width="0.55" height="0.85" fill="#319331"/><rect x="653.70" y="168.65" width="0.55" height="0.85" fill="#7b3814"/><rect x="654.25" y="168.65" width="1.10" height="0.85" fill="#000"/><rect x="655.90" y="168.65" width="0.55" height="0.85" fill="#000"/><rect x="657.00" y="168.65" width="1.10" height="0.85" fill="#000"/><rect x="658.10" y="168.65" width="0.55" height="0.85" fill="#7b3814"/><rect x="659.20" y="168.65" width="0.55" height="0.85" fill="#000"/><rect x="660.30" y="168.65" width="0.55" height="0.85" fill="#098658"/><rect x="660.85" y="168.65" width="0.55" height="0.85" fill="#319331"/><rect x="661.95" y="168.65" width="0.55" height="0.85" fill="#000"/><rect x="663.05" y="168.65" width="0.55" height="0.85" fill="#098658"/><rect x="663.60" y="168.65" width="0.55" height="0.85" fill="#000"/><rect x="646.00" y="169.72" width="0.55" height="0.85" fill="#0431fa"/><rect x="646.00" y="170.80" width="1.10" height="0.85" fill="#000"/><rect x="647.65" y="170.80" width="1.10" height="0.85" fill="#000"/><rect x="649.30" y="170.80" width="0.55" height="0.85" fill="#000"/><rect x="650.40" y="170.80" width="0.55" height="0.85" fill="#0431fa"/><rect x="650.95" y="170.80" width="0.55" height="0.85" fill="#000"/><rect x="652.05" y="170.80" width="0.55" height="0.85" fill="#000"/><rect x="653.15" y="170.80" width="0.55" height="0.85" fill="#098658"/><rect x="653.70" y="170.80" width="0.55" height="0.85" fill="#0431fa"/><rect x="654.80" y="170.80" width="0.55" height="0.85" fill="#000"/><rect x="655.90" y="170.80" width="0.55" height="0.85" fill="#098658"/><rect x="656.45" y="170.80" width="0.55" height="0.85" fill="#000"/><rect x="646.00" y="171.88" width="1.10" height="0.85" fill="#000"/><rect x="647.65" y="171.88" width="1.10" height="0.85" fill="#000"/><rect x="649.30" y="171.88" width="0.55" height="0.85" fill="#000"/><rect x="650.40" y="171.88" width="0.55" height="0.85" fill="#000"/><rect x="651.50" y="171.88" width="0.55" height="0.85" fill="#000"/><rect x="652.60" y="171.88" width="0.55" height="0.85" fill="#098658"/><rect x="653.15" y="171.88" width="0.55" height="0.85" fill="#000"/><rect x="646.00" y="172.95" width="1.10" height="0.85" fill="#000"/><rect x="647.65" y="172.95" width="1.10" height="0.85" fill="#000"/><rect x="649.30" y="172.95" width="0.55" height="0.85" fill="#000"/><rect x="650.40" y="172.95" width="0.55" height="0.85" fill="#0431fa"/><rect x="650.95" y="172.95" width="1.10" height="0.85" fill="#000"/><rect x="652.60" y="172.95" width="1.10" height="0.85" fill="#000"/><rect x="654.25" y="172.95" width="1.10" height="0.85" fill="#000"/><rect x="655.90" y="172.95" width="0.55" height="0.85" fill="#000"/><rect x="657.00" y="172.95" width="1.10" height="0.85" fill="#000"/><rect x="658.65" y="172.95" width="0.55" height="0.85" fill="#000"/><rect x="659.75" y="172.95" width="1.10" height="0.85" fill="#000"/><rect x="661.40" y="172.95" width="0.55" height="0.85" fill="#000"/><rect x="662.50" y="172.95" width="0.55" height="0.85" fill="#098658"/><rect x="663.60" y="172.95" width="0.55" height="0.85" fill="#000"/><rect x="664.70" y="172.95" width="0.55" height="0.85" fill="#098658"/><rect x="665.25" y="172.95" width="0.55" height="0.85" fill="#0431fa"/><rect x="665.80" y="172.95" width="0.55" height="0.85" fill="#000"/><rect x="646.00" y="174.02" width="1.10" height="0.85" fill="#000"/><rect x="647.65" y="174.02" width="1.10" height="0.85" fill="#000"/><rect x="649.30" y="174.02" width="0.55" height="0.85" fill="#000"/><rect x="650.40" y="174.02" width="0.55" height="0.85" fill="#098658"/><rect x="650.95" y="174.02" width="0.55" height="0.85" fill="#000"/><rect x="646.00" y="175.10" width="1.10" height="0.85" fill="#000"/><rect x="647.65" y="175.10" width="1.65" height="0.85" fill="#000"/><rect x="649.85" y="175.10" width="0.55" height="0.85" fill="#000"/><rect x="650.95" y="175.10" width="1.10" height="0.85" fill="#000"/><rect x="652.05" y="175.10" width="0.55" height="0.85" fill="#0431fa"/><rect x="652.60" y="175.10" width="1.10" height="0.85" fill="#000"/><rect x="653.70" y="175.10" width="0.55" height="0.85" fill="#0431fa"/><rect x="654.80" y="175.10" width="0.55" height="0.85" fill="#000"/><rect x="655.90" y="175.10" width="1.10" height="0.85" fill="#000"/><rect x="657.00" y="175.10" width="0.55" height="0.85" fill="#0431fa"/><rect x="657.55" y="175.10" width="1.10" height="0.85" fill="#000"/><rect x="659.20" y="175.10" width="0.55" height="0.85" fill="#000"/><rect x="660.30" y="175.10" width="0.55" height="0.85" fill="#098658"/><rect x="660.85" y="175.10" width="0.55" height="0.85" fill="#0431fa"/><rect x="661.40" y="175.10" width="0.55" height="0.85" fill="#000"/><rect x="646.00" y="176.18" width="1.10" height="0.85" fill="#0000ff"/><rect x="647.10" y="176.18" width="0.55" height="0.85" fill="#0431fa"/><rect x="647.65" y="176.18" width="0.55" height="0.85" fill="#000"/><rect x="648.75" y="176.18" width="1.10" height="0.85" fill="#000"/><rect x="650.40" y="176.18" width="0.55" height="0.85" fill="#098658"/><rect x="650.95" y="176.18" width="0.55" height="0.85" fill="#0431fa"/><rect x="652.05" y="176.18" width="1.10" height="0.85" fill="#000"/><rect x="653.70" y="176.18" width="0.55" height="0.85" fill="#000"/><rect x="654.80" y="176.18" width="2.20" height="0.85" fill="#000"/><rect x="646.00" y="177.25" width="2.20" height="0.85" fill="#0000ff"/><rect x="648.75" y="177.25" width="1.10" height="0.85" fill="#000"/><rect x="650.40" y="177.25" width="0.55" height="0.85" fill="#000"/><rect x="651.50" y="177.25" width="1.10" height="0.85" fill="#000"/><rect x="653.15" y="177.25" width="0.55" height="0.85" fill="#000"/><rect x="654.25" y="177.25" width="2.20" height="0.85" fill="#000"/><rect x="646.00" y="178.32" width="1.10" height="0.85" fill="#000"/><rect x="647.65" y="178.32" width="0.55" height="0.85" fill="#000"/><rect x="648.75" y="178.32" width="0.55" height="0.85" fill="#000"/><rect x="649.85" y="178.32" width="1.10" height="0.85" fill="#000"/><rect x="651.50" y="178.32" width="0.55" height="0.85" fill="#000"/><rect x="652.60" y="178.32" width="0.55" height="0.85" fill="#000"/><rect x="653.70" y="178.32" width="0.55" height="0.85" fill="#000"/><rect x="654.80" y="178.32" width="1.65" height="0.85" fill="#000"/><rect x="646.00" y="179.40" width="1.10" height="0.85" fill="#000"/><rect x="647.65" y="179.40" width="1.65" height="0.85" fill="#000"/><rect x="649.85" y="179.40" width="0.55" height="0.85" fill="#000"/><rect x="650.95" y="179.40" width="2.20" height="0.85" fill="#000"/><rect x="653.15" y="179.40" width="0.55" height="0.85" fill="#0431fa"/><rect x="653.70" y="179.40" width="0.55" height="0.85" fill="#000"/><rect x="654.25" y="179.40" width="0.55" height="0.85" fill="#0431fa"/><rect x="655.35" y="179.40" width="0.55" height="0.85" fill="#000"/><rect x="656.45" y="179.40" width="1.10" height="0.85" fill="#000"/><rect x="646.00" y="180.47" width="1.10" height="0.85" fill="#000"/><rect x="647.10" y="180.47" width="0.55" height="0.85" fill="#0431fa"/><rect x="647.65" y="180.47" width="0.55" height="0.85" fill="#000"/><rect x="648.20" y="180.47" width="0.55" height="0.85" fill="#0431fa"/><rect x="649.30" y="180.47" width="0.55" height="0.85" fill="#000"/><rect x="650.40" y="180.47" width="2.20" height="0.85" fill="#000"/><rect x="646.00" y="181.55" width="3.30" height="0.85" fill="#0000ff"/><rect x="649.85" y="181.55" width="2.20" height="0.85" fill="#000"/><rect x="643.80" y="182.62" width="0.55" height="0.85" fill="#7b3814"/><rect x="644.35" y="182.62" width="0.55" height="0.85" fill="#000"/><rect x="643.80" y="183.70" width="6.05" height="0.85" fill="#000"/><rect x="649.85" y="183.70" width="0.55" height="0.85" fill="#7b3814"/><rect x="650.40" y="183.70" width="1.10" height="0.85" fill="#000"/><rect x="651.50" y="183.70" width="0.55" height="0.85" fill="#7b3814"/><rect x="652.05" y="183.70" width="0.55" height="0.85" fill="#000"/><rect x="653.15" y="183.70" width="1.65" height="0.85" fill="#000"/><rect x="655.35" y="183.70" width="0.55" height="0.85" fill="#000"/><rect x="656.45" y="183.70" width="0.55" height="0.85" fill="#7b3814"/><rect x="657.00" y="183.70" width="0.55" height="0.85" fill="#000"/><rect x="657.55" y="183.70" width="1.10" height="0.85" fill="#7b3814"/><rect x="658.65" y="183.70" width="1.10" height="0.85" fill="#000"/><rect x="660.30" y="183.70" width="0.55" height="0.85" fill="#000"/><rect x="660.85" y="183.70" width="0.55" height="0.85" fill="#7b3814"/><rect x="661.95" y="183.70" width="1.10" height="0.85" fill="#000"/><rect x="663.60" y="183.70" width="1.10" height="0.85" fill="#000"/><rect x="643.80" y="184.77" width="0.55" height="0.85" fill="#7b3814"/><rect x="646.00" y="185.85" width="1.10" height="0.85" fill="#0000ff"/><rect x="647.10" y="185.85" width="0.55" height="0.85" fill="#0431fa"/><rect x="647.65" y="185.85" width="0.55" height="0.85" fill="#000"/><rect x="648.75" y="185.85" width="1.10" height="0.85" fill="#000"/><rect x="650.40" y="185.85" width="0.55" height="0.85" fill="#098658"/><rect x="650.95" y="185.85" width="0.55" height="0.85" fill="#0431fa"/><rect x="652.05" y="185.85" width="3.30" height="0.85" fill="#0000ff"/><rect x="655.90" y="185.85" width="1.65" height="0.85" fill="#098658"/><rect x="657.55" y="185.85" width="0.55" height="0.85" fill="#000"/><rect x="646.00" y="186.93" width="1.10" height="0.85" fill="#0000ff"/><rect x="647.10" y="186.93" width="0.55" height="0.85" fill="#0431fa"/><rect x="647.65" y="186.93" width="0.55" height="0.85" fill="#000"/><rect x="648.75" y="186.93" width="1.10" height="0.85" fill="#000"/><rect x="650.40" y="186.93" width="0.55" height="0.85" fill="#000"/><rect x="650.95" y="186.93" width="0.55" height="0.85" fill="#0431fa"/><rect x="652.05" y="186.93" width="3.30" height="0.85" fill="#0000ff"/><rect x="655.90" y="186.93" width="1.65" height="0.85" fill="#000"/><rect x="657.55" y="186.93" width="0.55" height="0.85" fill="#0431fa"/><rect x="658.10" y="186.93" width="0.55" height="0.85" fill="#319331"/><rect x="658.65" y="186.93" width="1.65" height="0.85" fill="#0000ff"/><rect x="660.30" y="186.93" width="0.55" height="0.85" fill="#319331"/><rect x="660.85" y="186.93" width="0.55" height="0.85" fill="#000"/><rect x="661.40" y="186.93" width="0.55" height="0.85" fill="#0431fa"/><rect x="661.95" y="186.93" width="0.55" height="0.85" fill="#000"/><rect x="646.00" y="188.00" width="1.10" height="0.85" fill="#000"/><rect x="647.65" y="188.00" width="1.65" height="0.85" fill="#000"/><rect x="649.85" y="188.00" width="0.55" height="0.85" fill="#000"/><rect x="650.95" y="188.00" width="1.65" height="0.85" fill="#000"/><rect x="652.60" y="188.00" width="0.55" height="0.85" fill="#0431fa"/><rect x="653.15" y="188.00" width="0.55" height="0.85" fill="#000"/><rect x="653.70" y="188.00" width="0.55" height="0.85" fill="#0431fa"/><rect x="654.25" y="188.00" width="0.55" height="0.85" fill="#000"/><rect x="646.00" y="189.07" width="1.10" height="0.85" fill="#000"/><rect x="647.65" y="189.07" width="2.20" height="0.85" fill="#000"/><rect x="650.40" y="189.07" width="0.55" height="0.85" fill="#000"/><rect x="651.50" y="189.07" width="0.55" height="0.85" fill="#0431fa"/><rect x="652.05" y="189.07" width="0.55" height="0.85" fill="#000"/><rect x="653.15" y="189.07" width="0.55" height="0.85" fill="#000"/><rect x="654.25" y="189.07" width="0.55" height="0.85" fill="#098658"/><rect x="654.80" y="189.07" width="0.55" height="0.85" fill="#0431fa"/><rect x="655.90" y="189.07" width="0.55" height="0.85" fill="#000"/><rect x="657.00" y="189.07" width="0.55" height="0.85" fill="#098658"/><rect x="657.55" y="189.07" width="0.55" height="0.85" fill="#000"/><rect x="646.00" y="190.15" width="1.10" height="0.85" fill="#000"/><rect x="647.65" y="190.15" width="2.20" height="0.85" fill="#000"/><rect x="650.40" y="190.15" width="0.55" height="0.85" fill="#000"/><rect x="651.50" y="190.15" width="0.55" height="0.85" fill="#000"/><rect x="652.60" y="190.15" width="0.55" height="0.85" fill="#000"/><rect x="653.70" y="190.15" width="0.55" height="0.85" fill="#098658"/><rect x="654.25" y="190.15" width="0.55" height="0.85" fill="#000"/><rect x="646.00" y="191.22" width="1.10" height="0.85" fill="#000"/><rect x="647.65" y="191.22" width="1.10" height="0.85" fill="#000"/><rect x="649.30" y="191.22" width="0.55" height="0.85" fill="#000"/><rect x="650.40" y="191.22" width="0.55" height="0.85" fill="#0431fa"/><rect x="650.95" y="191.22" width="2.20" height="0.85" fill="#000"/><rect x="653.70" y="191.22" width="1.10" height="0.85" fill="#000"/><rect x="655.35" y="191.22" width="2.20" height="0.85" fill="#000"/><rect x="658.10" y="191.22" width="0.55" height="0.85" fill="#000"/><rect x="659.20" y="191.22" width="1.10" height="0.85" fill="#000"/><rect x="660.30" y="191.22" width="0.55" height="0.85" fill="#319331"/><rect x="660.85" y="191.22" width="2.20" height="0.85" fill="#000"/><rect x="663.05" y="191.22" width="0.55" height="0.85" fill="#319331"/><rect x="664.15" y="191.22" width="0.55" height="0.85" fill="#000"/><rect x="665.25" y="191.22" width="1.10" height="0.85" fill="#000"/><rect x="666.35" y="191.22" width="0.55" height="0.85" fill="#319331"/><rect x="666.90" y="191.22" width="2.20" height="0.85" fill="#000"/><rect x="669.65" y="191.22" width="0.55" height="0.85" fill="#000"/><rect x="670.75" y="191.22" width="0.55" height="0.85" fill="#098658"/><rect x="671.30" y="191.22" width="0.55" height="0.85" fill="#319331"/><rect x="672.40" y="191.22" width="0.55" height="0.85" fill="#000"/><rect x="673.50" y="191.22" width="0.55" height="0.85" fill="#098658"/><rect x="674.05" y="191.22" width="0.55" height="0.85" fill="#0431fa"/><rect x="674.60" y="191.22" width="0.55" height="0.85" fill="#000"/><rect x="646.00" y="192.30" width="1.10" height="0.85" fill="#000"/><rect x="647.65" y="192.30" width="2.20" height="0.85" fill="#000"/><rect x="650.40" y="192.30" width="0.55" height="0.85" fill="#000"/><rect x="651.50" y="192.30" width="0.55" height="0.85" fill="#0431fa"/><rect x="652.05" y="192.30" width="0.55" height="0.85" fill="#000"/><rect x="653.15" y="192.30" width="0.55" height="0.85" fill="#000"/><rect x="654.25" y="192.30" width="0.55" height="0.85" fill="#098658"/><rect x="654.80" y="192.30" width="0.55" height="0.85" fill="#0431fa"/><rect x="655.90" y="192.30" width="0.55" height="0.85" fill="#000"/><rect x="657.00" y="192.30" width="0.55" height="0.85" fill="#098658"/><rect x="657.55" y="192.30" width="0.55" height="0.85" fill="#000"/><rect x="646.00" y="193.38" width="1.10" height="0.85" fill="#000"/><rect x="647.65" y="193.38" width="2.20" height="0.85" fill="#000"/><rect x="650.40" y="193.38" width="0.55" height="0.85" fill="#000"/><rect x="651.50" y="193.38" width="0.55" height="0.85" fill="#0431fa"/><rect x="652.05" y="193.38" width="0.55" height="0.85" fill="#000"/><rect x="653.15" y="193.38" width="0.55" height="0.85" fill="#000"/><rect x="654.25" y="193.38" width="0.55" height="0.85" fill="#098658"/><rect x="654.80" y="193.38" width="0.55" height="0.85" fill="#0431fa"/><rect x="655.90" y="193.38" width="0.55" height="0.85" fill="#000"/><rect x="657.00" y="193.38" width="0.55" height="0.85" fill="#098658"/><rect x="657.55" y="193.38" width="0.55" height="0.85" fill="#000"/><rect x="646.00" y="194.45" width="1.10" height="0.85" fill="#000"/><rect x="647.65" y="194.45" width="1.10" height="0.85" fill="#000"/><rect x="649.30" y="194.45" width="0.55" height="0.85" fill="#000"/><rect x="650.40" y="194.45" width="0.55" height="0.85" fill="#0431fa"/><rect x="650.95" y="194.45" width="2.20" height="0.85" fill="#000"/><rect x="653.70" y="194.45" width="1.10" height="0.85" fill="#000"/><rect x="655.35" y="194.45" width="2.20" height="0.85" fill="#000"/><rect x="658.10" y="194.45" width="0.55" height="0.85" fill="#000"/><rect x="659.20" y="194.45" width="1.10" height="0.85" fill="#000"/><rect x="660.30" y="194.45" width="0.55" height="0.85" fill="#319331"/><rect x="660.85" y="194.45" width="2.20" height="0.85" fill="#000"/><rect x="663.05" y="194.45" width="0.55" height="0.85" fill="#319331"/><rect x="664.15" y="194.45" width="0.55" height="0.85" fill="#000"/><rect x="665.25" y="194.45" width="1.10" height="0.85" fill="#000"/><rect x="666.35" y="194.45" width="0.55" height="0.85" fill="#319331"/><rect x="666.90" y="194.45" width="2.20" height="0.85" fill="#000"/><rect x="669.65" y="194.45" width="0.55" height="0.85" fill="#000"/><rect x="670.75" y="194.45" width="0.55" height="0.85" fill="#098658"/><rect x="671.30" y="194.45" width="0.55" height="0.85" fill="#319331"/><rect x="672.40" y="194.45" width="0.55" height="0.85" fill="#000"/><rect x="673.50" y="194.45" width="0.55" height="0.85" fill="#098658"/><rect x="674.05" y="194.45" width="0.55" height="0.85" fill="#0431fa"/><rect x="674.60" y="194.45" width="0.55" height="0.85" fill="#000"/><rect x="646.00" y="195.52" width="3.30" height="0.85" fill="#0000ff"/><rect x="649.85" y="195.52" width="1.65" height="0.85" fill="#000"/><rect x="652.05" y="195.52" width="0.55" height="0.85" fill="#000"/><rect x="653.15" y="195.52" width="1.10" height="0.85" fill="#000"/><rect x="654.80" y="195.52" width="0.55" height="0.85" fill="#000"/><rect x="655.90" y="195.52" width="1.65" height="0.85" fill="#000"/><rect x="643.80" y="196.60" width="0.55" height="0.85" fill="#7b3814"/><rect x="644.35" y="196.60" width="0.55" height="0.85" fill="#000"/><rect x="643.80" y="197.68" width="1.10" height="0.85" fill="#000"/><rect x="645.45" y="197.68" width="1.65" height="0.85" fill="#000"/><rect x="647.65" y="197.68" width="0.55" height="0.85" fill="#000"/><rect x="648.75" y="197.68" width="1.65" height="0.85" fill="#000"/><rect x="650.40" y="197.68" width="0.55" height="0.85" fill="#7b3814"/><rect x="650.95" y="197.68" width="0.55" height="0.85" fill="#000"/><rect x="651.50" y="197.68" width="0.55" height="0.85" fill="#7b3814"/><rect x="652.60" y="197.68" width="0.55" height="0.85" fill="#000"/><rect x="653.70" y="197.68" width="1.65" height="0.85" fill="#000"/><rect x="655.35" y="197.68" width="0.55" height="0.85" fill="#7b3814"/><rect x="655.90" y="197.68" width="0.55" height="0.85" fill="#000"/><rect x="657.00" y="197.68" width="0.55" height="0.85" fill="#000"/><rect x="658.10" y="197.68" width="0.55" height="0.85" fill="#098658"/><rect x="658.65" y="197.68" width="0.55" height="0.85" fill="#7b3814"/><rect x="659.20" y="197.68" width="0.55" height="0.85" fill="#000"/><rect x="643.80" y="198.75" width="2.20" height="0.85" fill="#000"/><rect x="646.55" y="198.75" width="1.10" height="0.85" fill="#000"/><rect x="648.20" y="198.75" width="1.65" height="0.85" fill="#000"/><rect x="650.40" y="198.75" width="1.10" height="0.85" fill="#000"/><rect x="652.05" y="198.75" width="2.20" height="0.85" fill="#a31515"/><rect x="654.25" y="198.75" width="0.55" height="0.85" fill="#000"/><rect x="641.60" y="199.82" width="0.55" height="0.85" fill="#319331"/><rect x="641.60" y="200.90" width="3.30" height="0.85" fill="#0000ff"/><rect x="645.45" y="200.90" width="0.55" height="0.85" fill="#098658"/><rect x="646.00" y="200.90" width="0.55" height="0.85" fill="#000"/><rect x="639.40" y="201.97" width="0.55" height="0.85" fill="#0431fa"/></g></svg>
    <div id="vscroll" class="abs"></div>
    <div id="vthumb" class="abs"></div>
  </div>
</div>
<div id="click" class="abs"><a>Click</a> to see test details</div>
</body></html>
